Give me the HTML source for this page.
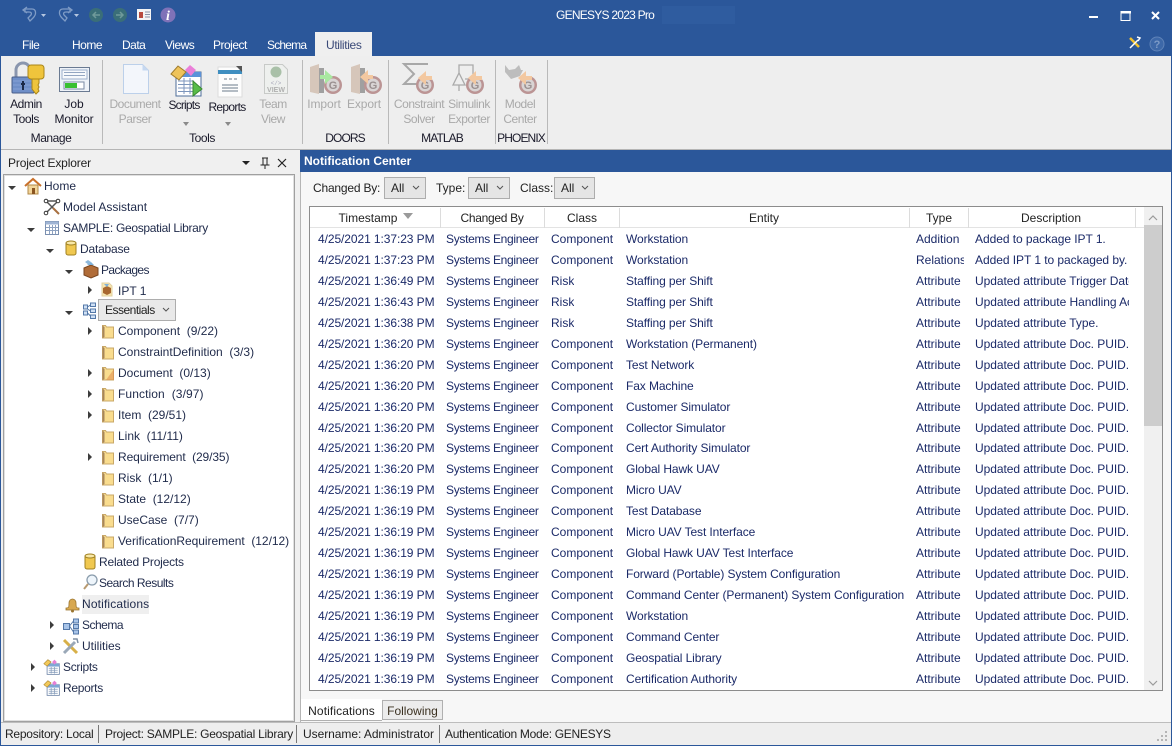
<!DOCTYPE html>
<html><head><meta charset="utf-8"><style>
html,body{margin:0;padding:0;width:1172px;height:746px;overflow:hidden;background:#f0f0f0}
body{position:relative;font:12px "Liberation Sans",sans-serif;color:#1a1a2a}
.a{position:absolute;white-space:nowrap}
.t{position:absolute;white-space:nowrap;text-align:center;transform:translateX(-50%);line-height:15px;letter-spacing:-.45px}
.u{letter-spacing:-.9px}
.g{color:#a9a9a9}
.tab{position:absolute;top:38px;color:#fff;line-height:15px;letter-spacing:-.5px}
.sep{position:absolute;top:60px;height:84px;width:1px;background:#b9b9b9}
.r{position:absolute;left:0;height:21px;width:1172px}
.r span{position:absolute;top:3px;line-height:15px;white-space:nowrap;overflow:hidden;color:#1b2a68}
.c1{left:318px;letter-spacing:-.08px}.c2{left:446px;letter-spacing:-.3px}.c3{left:551px}.c4{left:626px;width:282px;letter-spacing:-.1px}.c5{left:916px;width:48px}.c6{left:975px;width:154px;letter-spacing:-.05px}
.n{position:absolute;line-height:15px;white-space:nowrap;color:#1f2a4a}
.h{position:absolute;top:211px;line-height:15px;white-space:nowrap;transform:translateX(-50%);color:#222}
.hs{position:absolute;top:208px;height:20px;width:1px;background:#dcdcdc}
.cb{position:absolute;background:#e5e5e5;border:1px solid #adadad;box-sizing:border-box;height:22px;line-height:20px;padding-left:6px;color:#222}
.cb svg{position:absolute;right:4px;top:6px}
.s{position:absolute;top:727px;line-height:15px;color:#222;white-space:nowrap;letter-spacing:-.25px}
</style></head><body>
<svg width="0" height="0" style="position:absolute"><defs>
<symbol id="f" viewBox="0 0 14 15"><path d="M1.500 1.500h3l1 1.500h7v11h-11z" fill="#f9dc8e" stroke="#c9a868"/><path d="M1.500 1.500v12.500l2-1V3z" fill="#a8865a"/></symbol>
<symbol id="sc" viewBox="0 0 22 22"><rect x="5" y="7" width="15" height="13" fill="#fff" stroke="#6f86a8"/><rect x="5" y="7" width="15" height="3.500" fill="#7fa6d4"/><path d="M7 12.500h11M7 15h11M7 17.500h11M10 11v8M14 11v8" stroke="#8aa0bd"/><path d="M1 7l5-5 4 3-5 5z" fill="#f2c95a" stroke="#a8822c" stroke-width=".7"/><path d="M11 5l3-3 3 3-3 3z" fill="#e77fd6"/></symbol>
<symbol id="gb" viewBox="0 0 34 34"><circle cx="25" cy="24" r="9" fill="#bb9494"/><circle cx="25" cy="24" r="6.500" fill="#d9d4d4"/><text x="25" y="28" font-family="Liberation Sans" font-size="11" font-weight="bold" fill="#9a9090" text-anchor="middle">G</text></symbol>
<symbol id="door" viewBox="0 0 16 34"><path d="M1 4l9-3v30l-9-2z" fill="#d6c6ba"/><rect x="10" y="5" width="5" height="25" fill="#a0a0a0"/></symbol>
</defs></svg>

<!-- title bar -->
<div class="a" style="left:0;top:0;width:1172px;height:56px;background:#2b579a"></div>
<svg class="a" style="left:0;top:0" width="200" height="30">
<path d="M25 9h7c4 0 5 5 1 9l-3 3-2-3 3-3c1-2 0-3-2-3h-4zM27 7l-4 3 4 3" fill="none" stroke="#7f9cc6" stroke-width="1.300"/>
<path d="M41 14h5l-2.500 3z" fill="#b5c6e0"/>
<path d="M70 9h-7c-4 0-5 5-1 9l3 3 2-3-3-3c-1-2 0-3 2-3h4zM68 7l4 3-4 3" fill="none" stroke="#7f9cc6" stroke-width="1.300"/>
<path d="M74 14h5l-2.500 3z" fill="#b5c6e0"/>
<circle cx="96" cy="15" r="7" fill="#3a6e78"/><path d="M100 15h-6M96 12l-3 3 3 3" fill="none" stroke="#6f9a9a" stroke-width="1.500"/>
<circle cx="120" cy="15" r="7" fill="#3a6e78"/><path d="M116 15h6M120 12l3 3-3 3" fill="none" stroke="#6f9a9a" stroke-width="1.500"/>
<rect x="137" y="9" width="14" height="11" fill="#f4f4f4"/><rect x="139" y="12" width="4" height="6" fill="#b84a3e"/><path d="M145 12h5M145 14.500h5M145 17h5" stroke="#8a94a8"/>
<circle cx="168" cy="15" r="7.500" fill="#7f72b8"/><text x="168" y="20" font-family="Liberation Serif" font-size="14" font-weight="bold" font-style="italic" fill="#fff" text-anchor="middle">i</text>
</svg>
<div class="a" style="left:556px;top:7px;color:#fff;line-height:16px;letter-spacing:-.75px">GENESYS 2023 Pro</div>
<div class="a" style="left:662px;top:6px;width:73px;height:18px;background:#2f5c9f"></div>
<svg class="a" style="left:1080px;top:5px" width="92" height="22"><rect x="9" y="11" width="9" height="2" fill="#fff"/><path d="M41 6.500h9v9h-9z" fill="none" stroke="#fff"/><rect x="41" y="6" width="10" height="2.500" fill="#fff"/><path d="M72 7l7 7M79 7l-7 7" stroke="#fff" stroke-width="2"/></svg>
<svg class="a" style="left:1125px;top:34px" width="44" height="20"><path d="M5 4l9 9" stroke="#f2c230" stroke-width="2.500"/><path d="M5 14l8-8M12 3l3 1-2 3" stroke="#fff" stroke-width="1.500" fill="none"/><circle cx="32" cy="10" r="7" fill="#3d68a8" stroke="#5f83b8"/><text x="32" y="14" font-family="Liberation Sans" font-size="11" font-weight="bold" fill="#7c9ac6" text-anchor="middle">?</text></svg>
<div class="tab" style="left:22px">File</div>
<div class="tab" style="left:72px">Home</div>
<div class="tab" style="left:122px">Data</div>
<div class="tab" style="left:165px">Views</div>
<div class="tab" style="left:213px">Project</div>
<div class="tab" style="left:267px;letter-spacing:-.8px">Schema</div>
<div class="a" style="left:315px;top:32px;width:57px;height:24px;background:#efefef"></div>
<div class="a" style="left:326px;top:38px;line-height:15px;color:#3a4a78;letter-spacing:-.35px">Utilities</div>

<!-- ribbon -->
<div class="a" style="left:1px;top:56px;width:1170px;height:93px;background:#eeeeee;border-bottom:1px solid #b5b5b5"></div>
<div class="sep" style="left:102px"></div><div class="sep" style="left:302px"></div><div class="sep" style="left:388px"></div><div class="sep" style="left:495px"></div><div class="sep" style="left:547px"></div>
<svg class="a" style="left:0;top:56px" width="560" height="48">
<!-- admin -->
<path d="M16 21v-7a7 7 0 0 1 14 0v7" fill="none" stroke="#8a96ae" stroke-width="3"/>
<rect x="12" y="21" width="22" height="16" rx="1" fill="#6f8fc8" stroke="#4a5f8a"/><path d="M13 25h20M13 29h20M13 33h20" stroke="#86a2d6"/><path d="M23 25v9M21 28h4" stroke="#1c2a48" stroke-width="2"/>
<rect x="28" y="9" width="16" height="14" rx="3" fill="#efc43c" stroke="#a98518"/><path d="M32 23v10l4 5 3-3-1-2 1-2-1-2 1-2v-4z" fill="#efc43c" stroke="#a98518"/>
<!-- job monitor -->
<rect x="59.500" y="11.500" width="30" height="24" fill="#eef2f8" stroke="#6a7a92"/><rect x="62" y="14" width="25" height="9" fill="#f7f9fc" stroke="#9cb0cc"/><path d="M64 16.500h21M64 19.500h21" stroke="#94a6c2"/><rect x="64" y="26" width="20" height="7" fill="#fff" stroke="#7a8aa4"/><rect x="65" y="27" width="12" height="5" fill="#38c030"/>
<!-- document -->
<path d="M123.500 8.500h19l6 6v23h-25z" fill="#f3f6fb" stroke="#bcd0ea"/><path d="M142.500 8.500v6h6z" fill="#c6d8f0"/>
<!-- scripts -->
<rect x="176" y="16" width="25" height="24" fill="#fff" stroke="#4f6e9a"/><rect x="176" y="16" width="25" height="5" fill="#5b92d8"/><path d="M178 25h16M178 28.500h16M178 32h16M178 35.500h16M184 22v16M190 22v16" stroke="#7d96bc"/>
<path d="M171 18l7-8 8 6-7 8z" fill="#eec35a" stroke="#a07c2c"/><path d="M185 14l5-5 6 5-5 6z" fill="#ea7fd8"/><path d="M193 25l9 8-9 7z" fill="#58bc48" stroke="#3a8a30"/>
<!-- reports -->
<path d="M218 11h21l3 3v27h-24z" fill="#fdfdfd" stroke="#dcdcdc"/><rect x="218" y="14" width="24" height="4" fill="#3f8ec0"/><path d="M236 10l6 0 0 6z" fill="#555"/><path d="M224 23h3M229 23h3M234 23h3M222 29h16M222 32h16M222 35h16" stroke="#6a7a8a"/>
<!-- team -->
<path d="M264.500 8.500h18l5 5v24h-23z" fill="#eef0ee" stroke="#c8cac8"/><circle cx="276" cy="16" r="5.500" fill="#a9c0a8"/><text x="276" y="29" font-family="Liberation Mono" font-size="6" fill="#aab" text-anchor="middle">&lt;/&gt;</text><text x="276" y="36" font-family="Liberation Sans" font-size="7" font-weight="bold" fill="#b0b0b0" text-anchor="middle">VIEW</text>
<!-- import/export -->
<use href="#door" x="309" y="7" width="16" height="34"/><use href="#gb" x="308" y="5" width="34" height="34"/><path d="M320 19h5v-5l8 7-8 7v-5h-5z" fill="#a9e8a0"/>
<use href="#door" x="350" y="7" width="16" height="34"/><use href="#gb" x="348" y="5" width="34" height="34"/><path d="M373 19h-5v-5l-8 7 8 7v-5h5z" fill="#f3c8a0"/>
<!-- sigma -->
<path d="M428 8h-24l10 10-10 10h24" fill="none" stroke="#a8a8a8" stroke-width="2"/><use href="#gb" x="400" y="5" width="34" height="34"/><path d="M432 20h-6v-5l-8 7 8 7v-5h6z" fill="#f3c8a0"/>
<!-- simulink -->
<path d="M459 18V9h14v9M453 29l6-12 6 12zM459 29v6M465 23h5" fill="none" stroke="#aaa" stroke-width="1.300"/><use href="#gb" x="450" y="5" width="34" height="34"/><path d="M482 20h-6v-5l-8 7 8 7v-5h6z" fill="#f3c8a0"/>
<!-- model -->
<path d="M505 9l4 5 6-1 4-4 2 5 2 0-3 6-9 3-6-7z" fill="#bdbdbd"/><use href="#gb" x="503" y="5" width="34" height="34"/><path d="M532 20h-6v-5l-8 7 8 7v-5h6z" fill="#f3c8a0"/>
</svg>
<svg class="a" style="left:180px;top:120px" width="55" height="8"><path d="M3 2h6l-3 4zM45 2h6l-3 4z" fill="#8a8a8a"/></svg>
<div class="t" style="left:26px;top:97px">Admin</div><div class="t" style="left:26px;top:112px">Tools</div>
<div class="t" style="left:74px;top:97px;letter-spacing:0">Job</div><div class="t" style="left:74px;top:112px;letter-spacing:-.15px">Monitor</div>
<div class="t" style="left:51px;top:131px">Manage</div>
<div class="t g" style="left:135px;top:97px">Document</div><div class="t g" style="left:135px;top:112px">Parser</div>
<div class="t" style="left:184px;top:98px;letter-spacing:-.8px">Scripts</div>
<div class="t" style="left:227px;top:100px;letter-spacing:-.7px">Reports</div>
<div class="t g" style="left:273px;top:97px">Team</div><div class="t g" style="left:273px;top:112px">View</div>
<div class="t" style="left:202px;top:131px">Tools</div>
<div class="t g" style="left:324px;top:97px;letter-spacing:-.1px">Import</div><div class="t g" style="left:364px;top:97px;letter-spacing:-.1px">Export</div>
<div class="t u" style="left:345px;top:131px">DOORS</div>
<div class="t g" style="left:419px;top:97px">Constraint</div><div class="t g" style="left:419px;top:112px">Solver</div>
<div class="t g" style="left:469px;top:97px">Simulink</div><div class="t g" style="left:469px;top:112px">Exporter</div>
<div class="t u" style="left:442px;top:131px">MATLAB</div>
<div class="t g" style="left:520px;top:97px">Model</div><div class="t g" style="left:520px;top:112px">Center</div>
<div class="t u" style="left:521px;top:131px">PHOENIX</div>

<!-- project explorer -->
<div class="a" style="left:8px;top:156px;line-height:15px;color:#222;letter-spacing:-.15px">Project Explorer</div>
<svg class="a" style="left:240px;top:156px" width="50" height="14"><path d="M2 5h8l-4 4z" fill="#222"/><path d="M22 2h6M23 2v7h4V2M20.500 9h9M25 9v4" fill="none" stroke="#222"/><path d="M38 3l8 8M46 3l-8 8" stroke="#222" stroke-width="1.200"/></svg>
<div class="a" style="left:3px;top:174px;width:290px;height:546px;background:#fff;border:1px solid #a0a0a0;box-shadow:inset 0 0 0 1px #e0e0e0"></div>
<div class="a" style="left:82px;top:595px;width:67px;height:19px;background:#efefef"></div>

<svg class="a" style="left:0;top:174px" width="296" height="530">
<path d="M8 12h8l-4 4zM27 54h8l-4 4zM46 75h8l-4 4zM65 96h8l-4 4zM65 137h8l-4 4z" fill="#3c3c3c"/>
<path d="M88 112v8l4-4zM88 153v8l4-4zM88 195v8l4-4zM88 216v8l4-4zM88 237v8l4-4zM88 279v8l4-4zM50 447v8l4-4zM50 468v8l4-4zM31 489v8l4-4zM31 510v8l4-4z" fill="#3c3c3c"/>
<!-- home --><path d="M25 12l8-7 8 7" fill="none" stroke="#c9702a" stroke-width="2"/><path d="M28 11h10v9H28z" fill="#f2d59a" stroke="#b08848"/><rect x="32" y="14" width="3" height="6" fill="#8a5420"/>
<!-- model assistant --><path d="M46 27l12 12M58 27l-12 12M46 27h12" stroke="#555" stroke-width="1.500"/><circle cx="46" cy="27" r="1.800" fill="#fff" stroke="#333"/><circle cx="58" cy="27" r="1.800" fill="#fff" stroke="#333"/><circle cx="46" cy="39" r="1.800" fill="#fff" stroke="#333"/><path d="M53 34l6 6" stroke="#a87040" stroke-width="2"/>
<!-- sample --><rect x="45.500" y="47.500" width="13" height="13" fill="#fff" stroke="#7a8fb0"/><rect x="45.500" y="47.500" width="13" height="3" fill="#9fb4d4"/><path d="M46 53.500h12M46 56.500h12M49.500 51v9M52.500 51v9M55.500 51v9" stroke="#8ea2c0"/>
<!-- db --><rect x="66" y="68" width="10" height="13" rx="2" fill="#f0c850" stroke="#a08020"/><ellipse cx="71" cy="69" rx="5" ry="2" fill="#f8e8a8" stroke="#a08020"/>
<!-- packages --><path d="M84 94l7-3 7 3v7l-7 3-7-3z" fill="#b06c38" stroke="#7a4620"/><path d="M87 91l4-3 3 3" fill="#7eb0d8"/><path d="M85 88l4 3 2-3-3-2z" fill="#8cb8dc"/>
<!-- ipt --><path d="M102 109h7l3 3v10h-10z" fill="#f8e6b0" stroke="#e0d0a0"/><path d="M103 114l4-2 4 2v5l-4 2-4-2z" fill="#a86830"/><path d="M104 110l3 3 2-3" fill="#7eb0d8"/>
<!-- essentials --><rect x="83.500" y="131" width="4" height="4" fill="#cfe0f4" stroke="#5478a8"/><rect x="83.500" y="137" width="4" height="4" fill="#cfe0f4" stroke="#5478a8"/><rect x="90.500" y="129" width="5" height="3.500" fill="#cfe0f4" stroke="#5478a8"/><rect x="90.500" y="135" width="5" height="3.500" fill="#cfe0f4" stroke="#5478a8"/><rect x="90.500" y="141" width="5" height="3.500" fill="#cfe0f4" stroke="#5478a8"/><path d="M87.500 133l3-2M87.500 139l3 3M87.500 135l3 2" stroke="#5478a8"/>
<use href="#f" x="101" y="150" width="14" height="15"/>
<use href="#f" x="101" y="171" width="14" height="15"/>
<use href="#f" x="101" y="192" width="14" height="15"/><path d="M106 206l8-11v11z" fill="#e08a4a" opacity=".55"/>
<use href="#f" x="101" y="213" width="14" height="15"/>
<use href="#f" x="101" y="234" width="14" height="15"/>
<use href="#f" x="101" y="255" width="14" height="15"/>
<use href="#f" x="101" y="276" width="14" height="15"/>
<use href="#f" x="101" y="297" width="14" height="15"/>
<use href="#f" x="101" y="318" width="14" height="15"/>
<use href="#f" x="101" y="339" width="14" height="15"/>
<use href="#f" x="101" y="360" width="14" height="15"/>
<!-- related --><rect x="85" y="381" width="10" height="14" rx="2" fill="#f0c850" stroke="#a08020"/><ellipse cx="90" cy="382" rx="5" ry="2" fill="#f8e8a8" stroke="#a08020"/>
<!-- search --><circle cx="92" cy="406" r="5" fill="#eef5fb" stroke="#8a9cac" stroke-width="1.300"/><path d="M88 410l-4 5" stroke="#b89a70" stroke-width="2"/>
<!-- bell --><path d="M66 434c3 0 3-1 3-5a3.500 4 0 0 1 7 0c0 4 0 5 3 5v2H66z" fill="#d8a850" stroke="#9a7530" stroke-width=".8"/><circle cx="72.500" cy="437" r="1.500" fill="#9a7530"/>
<!-- schema --><rect x="63.500" y="449.500" width="6" height="6" fill="#a8c4e8" stroke="#5478a8"/><rect x="73.500" y="445" width="5" height="4" fill="#a8c4e8" stroke="#5478a8"/><rect x="73.500" y="450.500" width="5" height="4" fill="#a8c4e8" stroke="#5478a8"/><rect x="73.500" y="456" width="5" height="4" fill="#a8c4e8" stroke="#5478a8"/><path d="M69.500 452l4-5M69.500 452l4 6" stroke="#5478a8"/>
<!-- utilities --><path d="M64 466l13 13" stroke="#d8b048" stroke-width="3"/><path d="M64 479l11-11" stroke="#9aa8b8" stroke-width="3"/><path d="M73 465l4 0 1 4" fill="none" stroke="#8090a4" stroke-width="1.500"/>
<use href="#sc" x="43" y="484" width="18" height="18"/>
<use href="#sc" x="43" y="505" width="18" height="18"/>
</svg>

<div class="n" style="left:44px;top:179px">Home</div>
<div class="n" style="left:63px;top:200px">Model Assistant</div>
<div class="n" style="left:63px;top:221px;letter-spacing:-.3px">SAMPLE: Geospatial Library</div>
<div class="n" style="left:80px;top:242px;letter-spacing:-.2px">Database</div>
<div class="n" style="left:101px;top:263px;letter-spacing:-.6px">Packages</div>
<div class="n" style="left:118px;top:284px">IPT 1</div>
<div class="cb" style="left:98px;top:299px;width:78px;background:#e9e9e9;letter-spacing:-.5px">Essentials<svg width="10" height="8"><path d="M2 2l3 3 3-3" fill="none" stroke="#555"/></svg></div>
<div class="n" style="left:118px;top:324px">Component&nbsp; (9/22)</div>
<div class="n" style="left:118px;top:345px">ConstraintDefinition&nbsp; (3/3)</div>
<div class="n" style="left:118px;top:366px">Document&nbsp; (0/13)</div>
<div class="n" style="left:118px;top:387px;letter-spacing:.1px">Function&nbsp; (3/97)</div>
<div class="n" style="left:118px;top:408px">Item&nbsp; (29/51)</div>
<div class="n" style="left:118px;top:429px">Link&nbsp; (11/11)</div>
<div class="n" style="left:118px;top:450px;letter-spacing:-.1px">Requirement&nbsp; (29/35)</div>
<div class="n" style="left:118px;top:471px">Risk&nbsp; (1/1)</div>
<div class="n" style="left:118px;top:492px">State&nbsp; (12/12)</div>
<div class="n" style="left:118px;top:513px">UseCase&nbsp; (7/7)</div>
<div class="n" style="left:118px;top:534px;letter-spacing:-.03px">VerificationRequirement&nbsp; (12/12)</div>
<div class="n" style="left:99px;top:555px;letter-spacing:-.2px">Related Projects</div>
<div class="n" style="left:99px;top:576px;letter-spacing:-.5px">Search Results</div>
<div class="n" style="left:82px;top:597px;letter-spacing:.15px">Notifications</div>
<div class="n" style="left:82px;top:618px;letter-spacing:-.5px">Schema</div>
<div class="n" style="left:82px;top:639px">Utilities</div>
<div class="n" style="left:63px;top:660px;letter-spacing:-.3px">Scripts</div>
<div class="n" style="left:63px;top:681px;letter-spacing:-.3px">Reports</div>

<!-- notification center -->
<div class="a" style="left:300px;top:150px;width:872px;height:22px;background:#2b579a;color:#fff;font-weight:bold;line-height:22px;text-indent:4px">Notification Center</div>
<div class="a" style="left:300px;top:172px;width:871px;height:550px;background:#f7f7f7;border-left:1px solid #b5b5b5;box-sizing:border-box"></div>
<div class="a" style="left:313px;top:181px;line-height:15px;color:#222;letter-spacing:-.2px">Changed By:</div>
<div class="cb" style="left:384px;top:177px;width:42px">All<svg width="10" height="8"><path d="M2 2l3 3 3-3" fill="none" stroke="#555"/></svg></div>
<div class="a" style="left:436px;top:181px;line-height:15px;color:#222">Type:</div>
<div class="cb" style="left:468px;top:177px;width:42px">All<svg width="10" height="8"><path d="M2 2l3 3 3-3" fill="none" stroke="#555"/></svg></div>
<div class="a" style="left:520px;top:181px;line-height:15px;color:#222">Class:</div>
<div class="cb" style="left:554px;top:177px;width:41px">All<svg width="10" height="8"><path d="M2 2l3 3 3-3" fill="none" stroke="#555"/></svg></div>

<div class="a" style="left:309px;top:206px;width:854px;height:485px;background:#fff;border:1px solid #8c8c8c;box-sizing:border-box"></div>
<div class="a" style="left:310px;top:227px;width:834px;height:1px;background:#e3e3e3"></div>
<div class="hs" style="left:440px"></div><div class="hs" style="left:544px"></div><div class="hs" style="left:619px"></div><div class="hs" style="left:909px"></div><div class="hs" style="left:968px"></div><div class="hs" style="left:1135px"></div>
<div class="h" style="left:368px">Timestamp</div>
<svg class="a" style="left:402px;top:213px" width="12" height="7"><path d="M1 0h10l-5 6z" fill="#9a9a9a"/></svg>
<div class="h" style="left:492px;letter-spacing:-.3px">Changed By</div>
<div class="h" style="left:582px">Class</div>
<div class="h" style="left:764px">Entity</div>
<div class="h" style="left:939px">Type</div>
<div class="h" style="left:1051px">Description</div>
<div class="a" style="left:1144px;top:207px;width:18px;height:483px;background:#f0f0f0"></div>
<div class="a" style="left:1144px;top:225px;width:18px;height:201px;background:#cdcdcd"></div>
<svg class="a" style="left:1144px;top:207px" width="18" height="483"><path d="M5 13l4-4 4 4M5 474l4 4 4-4" fill="none" stroke="#9a9a9a" stroke-width="1.200"/></svg>

<div class="r" style="top:229px"><span class="c1">4/25/2021 1:37:23 PM</span><span class="c2">Systems Engineer</span><span class="c3">Component</span><span class="c4">Workstation</span><span class="c5">Addition</span><span class="c6">Added to package IPT 1.</span></div>
<div class="r" style="top:250px"><span class="c1">4/25/2021 1:37:23 PM</span><span class="c2">Systems Engineer</span><span class="c3">Component</span><span class="c4">Workstation</span><span class="c5">Relations</span><span class="c6">Added IPT 1 to packaged by.</span></div>
<div class="r" style="top:271px"><span class="c1">4/25/2021 1:36:49 PM</span><span class="c2">Systems Engineer</span><span class="c3">Risk</span><span class="c4">Staffing per Shift</span><span class="c5">Attribute</span><span class="c6">Updated attribute Trigger Date.</span></div>
<div class="r" style="top:292px"><span class="c1">4/25/2021 1:36:43 PM</span><span class="c2">Systems Engineer</span><span class="c3">Risk</span><span class="c4">Staffing per Shift</span><span class="c5">Attribute</span><span class="c6">Updated attribute Handling Action.</span></div>
<div class="r" style="top:313px"><span class="c1">4/25/2021 1:36:38 PM</span><span class="c2">Systems Engineer</span><span class="c3">Risk</span><span class="c4">Staffing per Shift</span><span class="c5">Attribute</span><span class="c6">Updated attribute Type.</span></div>
<div class="r" style="top:334px"><span class="c1">4/25/2021 1:36:20 PM</span><span class="c2">Systems Engineer</span><span class="c3">Component</span><span class="c4">Workstation (Permanent)</span><span class="c5">Attribute</span><span class="c6">Updated attribute Doc. PUID.</span></div>
<div class="r" style="top:355px"><span class="c1">4/25/2021 1:36:20 PM</span><span class="c2">Systems Engineer</span><span class="c3">Component</span><span class="c4">Test Network</span><span class="c5">Attribute</span><span class="c6">Updated attribute Doc. PUID.</span></div>
<div class="r" style="top:376px"><span class="c1">4/25/2021 1:36:20 PM</span><span class="c2">Systems Engineer</span><span class="c3">Component</span><span class="c4">Fax Machine</span><span class="c5">Attribute</span><span class="c6">Updated attribute Doc. PUID.</span></div>
<div class="r" style="top:397px"><span class="c1">4/25/2021 1:36:20 PM</span><span class="c2">Systems Engineer</span><span class="c3">Component</span><span class="c4">Customer Simulator</span><span class="c5">Attribute</span><span class="c6">Updated attribute Doc. PUID.</span></div>
<div class="r" style="top:418px"><span class="c1">4/25/2021 1:36:20 PM</span><span class="c2">Systems Engineer</span><span class="c3">Component</span><span class="c4">Collector Simulator</span><span class="c5">Attribute</span><span class="c6">Updated attribute Doc. PUID.</span></div>
<div class="r" style="top:438px"><span class="c1">4/25/2021 1:36:20 PM</span><span class="c2">Systems Engineer</span><span class="c3">Component</span><span class="c4">Cert Authority Simulator</span><span class="c5">Attribute</span><span class="c6">Updated attribute Doc. PUID.</span></div>
<div class="r" style="top:459px"><span class="c1">4/25/2021 1:36:20 PM</span><span class="c2">Systems Engineer</span><span class="c3">Component</span><span class="c4">Global Hawk UAV</span><span class="c5">Attribute</span><span class="c6">Updated attribute Doc. PUID.</span></div>
<div class="r" style="top:480px"><span class="c1">4/25/2021 1:36:19 PM</span><span class="c2">Systems Engineer</span><span class="c3">Component</span><span class="c4">Micro UAV</span><span class="c5">Attribute</span><span class="c6">Updated attribute Doc. PUID.</span></div>
<div class="r" style="top:501px"><span class="c1">4/25/2021 1:36:19 PM</span><span class="c2">Systems Engineer</span><span class="c3">Component</span><span class="c4">Test Database</span><span class="c5">Attribute</span><span class="c6">Updated attribute Doc. PUID.</span></div>
<div class="r" style="top:522px"><span class="c1">4/25/2021 1:36:19 PM</span><span class="c2">Systems Engineer</span><span class="c3">Component</span><span class="c4">Micro UAV Test Interface</span><span class="c5">Attribute</span><span class="c6">Updated attribute Doc. PUID.</span></div>
<div class="r" style="top:543px"><span class="c1">4/25/2021 1:36:19 PM</span><span class="c2">Systems Engineer</span><span class="c3">Component</span><span class="c4">Global Hawk UAV Test Interface</span><span class="c5">Attribute</span><span class="c6">Updated attribute Doc. PUID.</span></div>
<div class="r" style="top:564px"><span class="c1">4/25/2021 1:36:19 PM</span><span class="c2">Systems Engineer</span><span class="c3">Component</span><span class="c4">Forward (Portable) System Configuration</span><span class="c5">Attribute</span><span class="c6">Updated attribute Doc. PUID.</span></div>
<div class="r" style="top:585px"><span class="c1">4/25/2021 1:36:19 PM</span><span class="c2">Systems Engineer</span><span class="c3">Component</span><span class="c4">Command Center (Permanent) System Configuration</span><span class="c5">Attribute</span><span class="c6">Updated attribute Doc. PUID.</span></div>
<div class="r" style="top:606px"><span class="c1">4/25/2021 1:36:19 PM</span><span class="c2">Systems Engineer</span><span class="c3">Component</span><span class="c4">Workstation</span><span class="c5">Attribute</span><span class="c6">Updated attribute Doc. PUID.</span></div>
<div class="r" style="top:627px"><span class="c1">4/25/2021 1:36:19 PM</span><span class="c2">Systems Engineer</span><span class="c3">Component</span><span class="c4">Command Center</span><span class="c5">Attribute</span><span class="c6">Updated attribute Doc. PUID.</span></div>
<div class="r" style="top:648px"><span class="c1">4/25/2021 1:36:19 PM</span><span class="c2">Systems Engineer</span><span class="c3">Component</span><span class="c4">Geospatial Library</span><span class="c5">Attribute</span><span class="c6">Updated attribute Doc. PUID.</span></div>
<div class="r" style="top:669px"><span class="c1">4/25/2021 1:36:19 PM</span><span class="c2">Systems Engineer</span><span class="c3">Component</span><span class="c4">Certification Authority</span><span class="c5">Attribute</span><span class="c6">Updated attribute Doc. PUID.</span></div>

<!-- bottom tabs -->
<div class="a" style="left:382px;top:700px;width:61px;height:20px;background:#ececec;border:1px solid #b0b0b0;box-sizing:border-box;line-height:20px;text-align:center;color:#3a3020">Following</div>
<div class="a" style="left:301px;top:699px;width:81px;height:22px;background:#fff;border-bottom:1px solid #b0b0b0;box-sizing:border-box;line-height:24px;text-align:center;color:#222;letter-spacing:.1px">Notifications</div>

<!-- status bar -->
<div class="a" style="left:0;top:722px;width:1172px;height:23px;background:#eeeeee;border-top:1px solid #bdbdbd;box-sizing:border-box"></div>
<div class="a" style="left:0;top:745px;width:1172px;height:1px;background:#2b579a"></div>
<div class="a" style="left:0;top:0;width:1px;height:746px;background:#2b579a"></div>
<div class="a" style="left:1171px;top:0;width:1px;height:746px;background:#2b579a"></div>
<div class="s" style="left:5px">Repository: Local</div>
<div class="a" style="left:98px;top:725px;width:1px;height:18px;background:#777"></div>
<div class="s" style="left:105px">Project: SAMPLE: Geospatial Library</div>
<div class="a" style="left:296px;top:725px;width:1px;height:18px;background:#777"></div>
<div class="s" style="left:303px;letter-spacing:-.05px">Username: Administrator</div>
<div class="a" style="left:439px;top:725px;width:1px;height:18px;background:#777"></div>
<div class="s" style="left:445px;letter-spacing:-.3px">Authentication Mode: GENESYS</div>
<svg class="a" style="left:1156px;top:730px" width="14" height="14"><path d="M9 1h2v2H9zM5 5h2v2H5zM9 5h2v2H9zM1 9h2v2H1zM5 9h2v2H5zM9 9h2v2H9z" fill="#b5b5b5"/></svg>
</body></html>
